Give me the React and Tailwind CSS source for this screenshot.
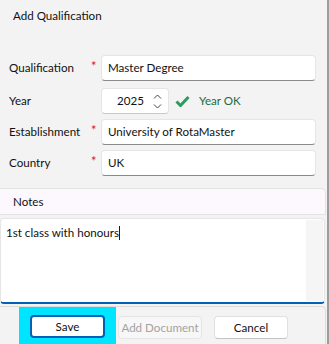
import React from 'react';

const font = { fontFamily: 'Lato, "Liberation Sans", sans-serif' };

function Field({ label, required, children, className = '' }) {
    return (
        <div className={`flex items-center h-[26px] ${className}`}>
            <span className="w-[83px] shrink-0 whitespace-nowrap pl-[9px] text-[11.6px] text-[#111]">{label}</span>
            <span className="w-[18px] shrink-0 text-[13px] leading-none text-[#e81123] pl-[8px] -mt-[4px]">{required ? '*' : ''}</span>
            {children}
        </div>
    );
}

function TextBox({ value }) {
    return (
        <div className="w-[215px] h-[26px] bg-white border border-[#e5e5e5] border-b-[#8a8a8a] rounded-[4px] flex items-center px-[6px] text-[11.6px] text-[#111] whitespace-nowrap">
            {value}
        </div>
    );
}

export default function App() {
    return (
        <div style={font} className="w-[329px] h-[344px] bg-[#f3f3f3] border-r-2 border-[#9c9c9c] flex flex-col overflow-hidden">
            {/* Title */}
            <div className="pl-[13px] pt-[8px] h-[55px] text-[11.6px] leading-[16px] text-[#111]">Add Qualification</div>

            {/* Form */}
            <Field label="Qualification" required>
                <TextBox value="Master Degree" />
            </Field>
            <Field label="Year" className="mt-[7px]">
                <div className="w-[68px] h-[26px] bg-white border border-[#e5e5e5] border-b-[#c8c8c8] rounded-[4px] flex items-center pl-[15px] text-[11.6px] text-[#111]">
                    <span>2025</span>
                    <svg width="9" height="17" viewBox="0 0 9 17" className="ml-[9px]" fill="none" stroke="#444" strokeWidth="1">
                        <path d="M1 5.5 L4.5 2 L8 5.5" />
                        <path d="M1 11.5 L4.5 15 L8 11.5" />
                    </svg>
                </div>
                <svg width="15" height="12" viewBox="0 0 15 12" className="ml-[6px]">
                    <path d="M1.5 6.5 L5.5 10.5 L13.5 2" fill="none" stroke="#2a9d5c" strokeWidth="3" />
                </svg>
                <span className="ml-[9px] text-[11.6px] text-[#1d6a3a] whitespace-nowrap">Year OK</span>
            </Field>
            <Field label="Establishment" required className="mt-[5px]">
                <TextBox value="University of RotaMaster" />
            </Field>
            <Field label="Country" required className="mt-[5px]">
                <TextBox value="UK" />
            </Field>

            {/* Notes */}
            <div className="mt-[12px] mr-[1px] h-[27px] bg-[#fdf8fd] border border-l-0 border-[#e3e3e3] rounded-tr-[5px] flex items-center pl-[13px] text-[11.6px] text-[#111]">
                Notes
            </div>
            <div className="mt-[3px] mr-[2px] h-[86px] bg-white border border-[#e5e5e5] border-b-2 border-b-[#005fb8] rounded-[4px] flex">
                <div className="flex-1 pl-[5px] pt-[6px] text-[11.6px] leading-[16px] text-[#111]">
                    1st class with honours<span className="inline-block w-px h-[14px] bg-[#1b1b1b] align-middle -mt-[2px]" />
                </div>
                <div className="w-[17px] bg-[#f5f5f5] my-[1px] mr-[1px]" />
            </div>

            {/* Buttons */}
            <div className="mt-[2px] mr-[1px] flex-1 border border-l-0 border-b-0 border-[#dcdcdc] rounded-tr-[5px] flex items-end">
                <div className="ml-[19px] w-[97px] h-[37px] bg-[#00e5ff] flex items-start pt-[8px] pl-[11px]">
                    <div className="w-[75px] h-[23px] bg-white border-2 border-[#005fb8] rounded-[4px] flex items-center justify-center text-[11.6px] text-[#111]">
                        Save
                    </div>
                </div>
                <div className="self-start mt-[9px] ml-[2px] w-[84px] h-[23px] bg-[#f7f7f7] border border-[#e5e5e5] rounded-[4px] flex items-center justify-center text-[11.6px] text-[#a3a3a3] whitespace-nowrap">
                    Add Document
                </div>
                <div className="self-start mt-[9px] ml-[12px] w-[74px] h-[23px] bg-white border border-[#e0e0e0] border-b-[#c4c4c4] rounded-[4px] flex items-center justify-center text-[11.6px] text-[#111]">
                    Cancel
                </div>
            </div>
        </div>
    );
}
